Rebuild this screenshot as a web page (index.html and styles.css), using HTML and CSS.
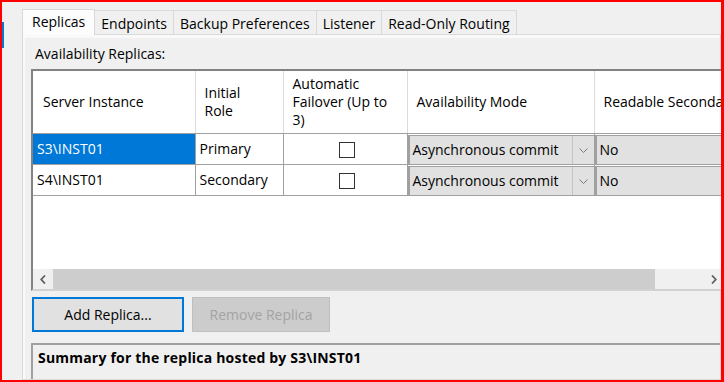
FILE: index.html
```html
<!DOCTYPE html>
<html lang="en">
<head>
    <meta charset="UTF-8">
    <meta name="viewport" content="width=device-width, initial-scale=1.0">
    <title>New Availability Group - Specify Replicas</title>
    <link rel="stylesheet" href="styles.css">
</head>
<body>
    <div class="window">
        <div class="side">
            <div class="side-mark"></div>
        </div>

        <div class="tab-control">
            <ul class="tabs">
                <li class="tab selected">Replicas</li>
                <li class="tab">Endpoints</li>
                <li class="tab">Backup Preferences</li>
                <li class="tab">Listener</li>
                <li class="tab">Read-Only Routing</li>
            </ul>

            <div class="tab-page">
                <div class="panel">
                    <p class="label">Availability Replicas:</p>

                    <!-- replicas grid -->
                    <div class="grid">
                        <table class="replicas">
                            <colgroup>
                                <col class="c-server">
                                <col class="c-role">
                                <col class="c-failover">
                                <col class="c-mode">
                                <col class="c-readable">
                            </colgroup>
                            <thead>
                                <tr>
                                    <th>Server Instance</th>
                                    <th>Initial<br>Role</th>
                                    <th>Automatic<br>Failover (Up to<br>3)</th>
                                    <th>Availability Mode</th>
                                    <th>Readable Secondary</th>
                                </tr>
                            </thead>
                            <tbody>
                                <tr>
                                    <td class="current">S3\INST01</td>
                                    <td>Primary</td>
                                    <td class="check-cell"><span class="checkbox"></span></td>
                                    <td class="combo-cell">
                                        <div class="combo">
                                            <span class="combo-text">Asynchronous commit</span>
                                            <span class="combo-arrow">
                                                <svg width="9" height="5" viewBox="0 0 9 5"><polyline points="0.5,0.5 4.5,4.5 8.5,0.5" fill="none" stroke="#7a7a7a" stroke-width="1"/></svg>
                                            </span>
                                        </div>
                                    </td>
                                    <td class="combo-cell">
                                        <div class="combo"><span class="combo-text">No</span></div>
                                    </td>
                                </tr>
                                <tr>
                                    <td>S4\INST01</td>
                                    <td>Secondary</td>
                                    <td class="check-cell"><span class="checkbox"></span></td>
                                    <td class="combo-cell">
                                        <div class="combo">
                                            <span class="combo-text">Asynchronous commit</span>
                                            <span class="combo-arrow">
                                                <svg width="9" height="5" viewBox="0 0 9 5"><polyline points="0.5,0.5 4.5,4.5 8.5,0.5" fill="none" stroke="#7a7a7a" stroke-width="1"/></svg>
                                            </span>
                                        </div>
                                    </td>
                                    <td class="combo-cell">
                                        <div class="combo"><span class="combo-text">No</span></div>
                                    </td>
                                </tr>
                            </tbody>
                        </table>

                        <div class="grid-fill"></div>

                        <div class="hscroll">
                            <span class="sb-btn">
                                <svg width="6" height="9" viewBox="0 0 6 9"><polyline points="5,0.5 1.2,4.5 5,8.5" fill="none" stroke="#606060" stroke-width="1.8"/></svg>
                            </span>
                            <span class="sb-thumb"></span>
                            <span class="sb-track"></span>
                            <span class="sb-btn">
                                <svg width="6" height="9" viewBox="0 0 6 9"><polyline points="1,0.5 4.8,4.5 1,8.5" fill="none" stroke="#606060" stroke-width="1.8"/></svg>
                            </span>
                        </div>
                    </div>

                    <div class="buttons">
                        <button class="btn default">Add Replica...</button>
                        <button class="btn" disabled>Remove Replica</button>
                    </div>

                    <div class="summary">
                        <p>Summary for the replica hosted by S3\INST01</p>
                    </div>
                </div>
            </div>
        </div>
    </div>
</body>
</html>
```

FILE: styles.css
```css
body {
    margin: 0;
    padding: 0;
    font-family: "Open Sans", "Noto Sans", sans-serif;
    font-size: 14px;
    color: #000;
}
.window {
    width: 724px;
    height: 382px;
    box-sizing: border-box;
    border: 2px solid #ff0000;
    border-right-width: 3px;
    background-color: #f0f0f0;
    overflow: hidden;
    display: flex;
}
.side {
    width: 20px;
    flex-shrink: 0;
}
.side-mark {
    width: 2px;
    height: 26px;
    margin-top: 20px;
    background-color: #0078d7;
}
.tab-control {
    flex: 1;
    display: flex;
    flex-direction: column;
    padding-top: 6px;
    min-width: 0;
}
.tabs {
    list-style-type: none;
    margin: 0;
    padding: 0;
    display: flex;
    align-items: flex-end;
    height: 26px;
    position: relative;
    z-index: 1;
}
.tab {
    height: 21px;
    line-height: 21px;
    padding: 2px 6px 0;
    margin-left: -1px;
    border: 1px solid #d9d9d9;
    border-bottom: none;
    background-color: #f0f0f0;
    white-space: nowrap;
}
.tab.selected {
    height: 24px;
    line-height: 22px;
    padding: 1px 9px 0;
    margin-left: 0;
    margin-bottom: -1px;
    background-color: #fcfcfc;
}
.tab-page {
    flex: 1;
    display: flex;
    border: 1px solid #d9d9d9;
    background-color: #f9f9f9;
    padding: 3px 0 0 2px;
}
.panel {
    flex: 1;
    display: flex;
    flex-direction: column;
    background-color: #f0f0f0;
    min-width: 0;
}
.label {
    margin: 7px 0 0 10px;
    line-height: 18px;
}
.grid {
    margin: 6px 0 0 6px;
    width: 695px;
    height: 222px;
    box-sizing: border-box;
    border: 2px solid;
    border-color: #828282 #e3e3e3 #d2d2d2 #828282;
    background-color: #fff;
    display: flex;
    flex-direction: column;
    overflow: hidden;
}
.replicas {
    border-collapse: collapse;
    table-layout: fixed;
    width: 761px;
    line-height: 18px;
}
.c-server { width: 162px; }
.c-role { width: 88px; }
.c-failover { width: 124px; }
.c-mode { width: 187px; }
.c-readable { width: 200px; }
.replicas th {
    height: 62px;
    padding: 0 0 0 9px;
    font-weight: normal;
    text-align: left;
    white-space: nowrap;
    border-right: 1px solid #dcdcdc;
    border-bottom: 1px solid #a0a0a0;
}
.replicas th:first-child {
    padding-left: 10px;
}
.replicas td {
    height: 30px;
    padding: 0 0 0 4px;
    white-space: nowrap;
    border-right: 1px solid #a0a0a0;
    border-bottom: 1px solid #a0a0a0;
}
.replicas td.current {
    background-color: #0078d7;
    color: #fff;
}
.check-cell {
    text-align: center;
}
.checkbox {
    display: inline-block;
    width: 14px;
    height: 14px;
    border: 1px solid #333;
    background-color: #fff;
    vertical-align: middle;
}
.replicas td.combo-cell {
    padding: 0;
}
.combo {
    display: flex;
    height: 28px;
    margin: 1px 0 0 0;
    border-left: 2px solid #a0a0a0;
    border-top: 1px solid #a0a0a0;
    background-color: #e1e1e1;
}
.combo-text {
    flex: 1;
    padding-left: 3px;
    line-height: 28px;
}
.combo-arrow {
    width: 21px;
    border-left: 1px solid #c4c4c4;
    display: flex;
    align-items: center;
    justify-content: center;
}
.grid-fill {
    flex: 1;
}
.hscroll {
    height: 20px;
    display: flex;
    background-color: #f0f0f0;
    flex-shrink: 0;
}
.sb-btn {
    width: 20px;
    display: flex;
    align-items: center;
    justify-content: center;
}
.sb-thumb {
    width: 602px;
    background-color: #cdcdcd;
}
.sb-track {
    flex: 1;
}
.buttons {
    display: flex;
    gap: 8px;
    margin: 6px 0 0 7px;
}
.btn {
    height: 35px;
    font-family: inherit;
    font-size: 14px;
    color: #000;
    background-color: #e1e1e1;
    border: 1px solid #adadad;
    padding: 0;
}
.btn.default {
    width: 152px;
    border: 2px solid #0078d7;
}
.btn:disabled {
    width: 138px;
    background-color: #cccccc;
    border-color: #bfbfbf;
    color: #a3a3a3;
}
.summary {
    flex: 1;
    margin: 11px 0 0 6px;
    border-top: 2px solid #a0a0a0;
    border-left: 2px solid #a0a0a0;
}
.summary p {
    margin: 4px 0 0 5px;
    line-height: 18px;
    font-weight: bold;
    letter-spacing: 0.2px;
    white-space: nowrap;
}
```
